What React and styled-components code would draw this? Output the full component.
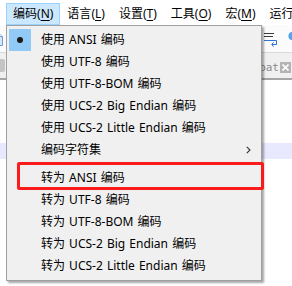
import React from 'react';
import styled, { createGlobalStyle } from 'styled-components';

const Global = createGlobalStyle`
  html, body { margin: 0; padding: 0; background: #fff; }
  body {
    width: 292px; height: 286px; overflow: hidden;
    font-family: "Noto Sans", "Noto Sans CJK SC", sans-serif;
    -webkit-font-smoothing: antialiased;
  }
`;

const Window = styled.div`
  position: relative;
  width: 292px;
  height: 286px;
  overflow: hidden;
  background: #fff;
  display: flex;
  flex-direction: column;
`;

const MenuBar = styled.div`
  display: flex;
  height: 25px;
  box-sizing: border-box;
  padding: 3px 0 0 6px;
  background: #fff;
  overflow: hidden;
`;

const MenuBarItem = styled.div`
  height: 22px;
  box-sizing: border-box;
  padding: 0 6px;
  display: flex;
  align-items: center;
  font-size: 12px;
  line-height: 20px;
  color: #000;
  white-space: nowrap;
  flex-shrink: 0;
  border: 1px solid ${p => (p.$open ? '#99d1ff' : 'transparent')};
  background: ${p => (p.$open ? '#cce8ff' : 'transparent')};
  u { text-underline-offset: 2px; }
`;

const Toolbar = styled.div`
  height: 28px;
  box-sizing: border-box;
  border-bottom: 1px solid #dadada;
  display: flex;
  align-items: center;
  overflow: hidden;
  background: #fbfbfb;
`;

const Spacer = styled.div`
  flex: 1;
`;

const ToolIcon = styled.svg`
  flex-shrink: 0;
  margin-left: ${p => p.$ml || 0}px;
  margin-right: ${p => p.$mr || 0}px;
`;

const TabBar = styled.div`
  height: 27px;
  box-sizing: border-box;
  background: #f0f0f0;
  border-bottom: 2px solid #a5a5a5;
  display: flex;
  align-items: center;
  overflow: hidden;
`;

const TabGrip = styled.div`
  width: 12px;
  height: 13px;
  margin-left: -7px;
  background: #c4c4c4;
  border-radius: 2px;
`;

const TabLabel = styled.span`
  font-family: "DejaVu Sans Mono", "Liberation Mono", monospace;
  font-size: 11px;
  color: #8a8a8a;
  margin-top: 4px;
`;

const CloseBox = styled.div`
  width: 11px;
  height: 11px;
  margin: 4px 1px 0 1px;
  background: #b4b4b4;
  display: flex;
  align-items: center;
  justify-content: center;
`;

const Editor = styled.div`
  flex: 1;
  padding-top: 63px;
  background: #fff;
`;

const CodeLine = styled.div`
  height: 16px;
  background: ${p => (p.$current ? '#e8e8ff' : 'transparent')};
`;

const Dropdown = styled.div`
  position: absolute;
  left: 6px;
  top: 25px;
  width: 256px;
  box-sizing: border-box;
  background: #f0f0f0;
  border: 1px solid #a0a0a0;
  padding: 3px 0;
  box-shadow: 2px 2px 2px rgba(0, 0, 0, 0.35);
`;

const Item = styled.div`
  position: relative;
  display: grid;
  grid-template-columns: 22px 1fr auto;
  column-gap: 10px;
  align-items: center;
  height: 22px;
  padding: 0 10px 0 2px;
  font-size: 12px;
  line-height: 22px;
  color: #000;
  white-space: nowrap;
  word-spacing: 1px;
`;

const Check = styled.div`
  width: 22px;
  height: 22px;
  display: flex;
  align-items: center;
  justify-content: center;
  background: ${p => (p.$checked ? '#91c9f7' : 'transparent')};
`;

const Dot = styled.div`
  width: 6px;
  height: 6px;
  border-radius: 50%;
  background: #1a1a1a;
`;

const Separator = styled.div`
  height: 6px;
  display: flex;
  align-items: center;
  padding: 0 2px 0 34px;
  &::after {
    content: '';
    flex: 1;
    height: 1px;
    background: #d7d7d7;
  }
`;

const Annotation = styled.div`
  position: absolute;
  left: 10px;
  top: -5px;
  width: 247px;
  height: 28px;
  box-sizing: border-box;
  border: 3px solid #fa1c1c;
  border-radius: 2px;
  pointer-events: none;
`;

const Chevron = () => (
  <svg width="5" height="8" viewBox="0 0 5 8">
    <path d="M0.8 0.8 L4 4 L0.8 7.2" stroke="#333" strokeWidth="1.1" fill="none" />
  </svg>
);

const menuBar = [
  ['编码', 'N', true],
  ['语言', 'L'],
  ['设置', 'T'],
  ['工具', 'O'],
  ['宏', 'M'],
  ['运行', 'R'],
];

const items = [
  { label: '使用 ANSI 编码', checked: true },
  { label: '使用 UTF-8 编码' },
  { label: '使用 UTF-8-BOM 编码' },
  { label: '使用 UCS-2 Big Endian 编码' },
  { label: '使用 UCS-2 Little Endian 编码' },
  { label: '编码字符集', sub: true },
  { sep: true },
  { label: '转为 ANSI 编码', marked: true },
  { label: '转为 UTF-8 编码' },
  { label: '转为 UTF-8-BOM 编码' },
  { label: '转为 UCS-2 Big Endian 编码' },
  { label: '转为 UCS-2 Little Endian 编码' },
];

export default function App() {
  return (
    <>
      <Global />
      <Window>
        <MenuBar>
          {menuBar.map(([t, k, open]) => (
            <MenuBarItem key={t} $open={open}>
              {t}(<u>{k}</u>)
            </MenuBarItem>
          ))}
        </MenuBar>
        <Toolbar>
          <ToolIcon width="16" height="16" viewBox="0 0 16 16" $ml={-11}>
            <path d="M2.5 1.5h7l4 4v9h-11z" fill="#d6e8fa" stroke="#6c9fd6" />
            <path d="M9.5 1.5v4h4" fill="#eef5fd" stroke="#6c9fd6" />
          </ToolIcon>
          <Spacer />
          <ToolIcon width="17" height="16" viewBox="0 0 17 16">
            <path d="M1 2.5h10M1 5.5h9" stroke="#3a3a3a" />
            <path d="M1 9.5h12.5v4h-4.5" stroke="#2f73d8" fill="none" />
            <path d="M10.8 11.3l-2.2 2.2 2.2 2.2" stroke="#2f73d8" fill="none" />
          </ToolIcon>
          <ToolIcon width="12" height="16" viewBox="0 0 12 16" $ml={7} $mr={-7}>
            <path d="M5.5 1h6v1.6h-1.4V15H8.6V2.6H7V15H5.5V9.2A4.1 4.1 0 0 1 5.5 1z" fill="#5aa3ea" />
          </ToolIcon>
        </Toolbar>
        <TabBar>
          <TabGrip />
          <Spacer />
          <TabLabel>bat</TabLabel>
          <CloseBox>
            <svg width="7" height="7" viewBox="0 0 7 7">
              <path d="M0.5 0.5l6 6M6.5 0.5l-6 6" stroke="#fff" strokeWidth="1.6" />
            </svg>
          </CloseBox>
        </TabBar>
        <Editor>
          <CodeLine $current />
        </Editor>

        <Dropdown>
          {items.map((it, i) =>
            it.sep ? (
              <Separator key={i} />
            ) : (
              <Item key={i}>
                <Check $checked={it.checked}>{it.checked && <Dot />}</Check>
                <span>{it.label}</span>
                {it.sub ? <Chevron /> : <span />}
                {it.marked && <Annotation />}
              </Item>
            )
          )}
        </Dropdown>
      </Window>
    </>
  );
}
